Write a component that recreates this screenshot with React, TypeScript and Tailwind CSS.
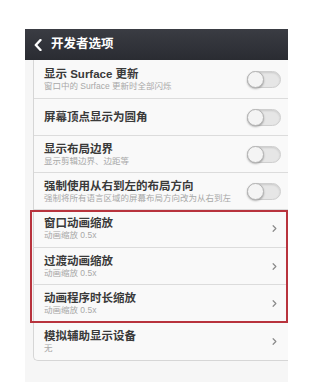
import { ChevronRight } from "lucide-react";

const font = { fontFamily: '"Liberation Sans", "Noto Sans CJK SC", sans-serif' };

type Row = { title: string; sub?: string; kind: "toggle" | "arrow"; h: string };

const rows: Row[] = [
  { title: "显示 Surface 更新", sub: "窗口中的 Surface 更新时全部闪烁", kind: "toggle", h: "h-[39px]" },
  { title: "屏幕顶点显示为圆角", kind: "toggle", h: "h-[37px]" },
  { title: "显示布局边界", sub: "显示剪辑边界、边距等", kind: "toggle", h: "h-[37px]" },
  { title: "强制使用从右到左的布局方向", sub: "强制将所有语言区域的屏幕布局方向改为从右到左", kind: "toggle", h: "h-[37px]" },
  { title: "窗口动画缩放", sub: "动画缩放 0.5x", kind: "arrow", h: "h-[38px]" },
  { title: "过渡动画缩放", sub: "动画缩放 0.5x", kind: "arrow", h: "h-[37px]" },
  { title: "动画程序时长缩放", sub: "动画缩放 0.5x", kind: "arrow", h: "h-[38px]" },
  { title: "模拟辅助显示设备", sub: "无", kind: "arrow", h: "h-[37px]" },
];

function Toggle() {
  return (
    <div className="relative w-[34px] h-[17px] rounded-full bg-[#e6e6e6] border border-[#cfcfcf] shadow-[inset_0_1px_2px_rgba(0,0,0,0.12)]">
      <div className="absolute -left-[1px] -top-[1px] w-[17px] h-[17px] rounded-full bg-[#f4f4f4] border border-[#b5b5b5] shadow-[0_1px_2px_rgba(0,0,0,0.3)]" />
    </div>
  );
}

export default function App() {
  return (
    <div className="w-[332px] h-[382px] bg-white overflow-hidden pl-[25px] pt-[29px]" style={font}>
      <div className="w-[263px] h-[353px] flex flex-col bg-[#f6f6f6]">
        {/* Header */}
        <div className="h-[31px] shrink-0 flex items-center gap-[9px] pl-[9px] bg-gradient-to-b from-[#3a3c43] to-[#2a2c32]">
          <svg width="8" height="12" viewBox="0 0 8 12" className="shrink-0">
            <path d="M6.5 1 L1.8 6 L6.5 11" stroke="white" strokeWidth="2.4" fill="none" strokeLinecap="round" strokeLinejoin="round" />
          </svg>
          <span className="text-white text-[12.5px] font-bold">开发者选项</span>
        </div>

        {/* List */}
        <div className="relative ml-[8px] bg-[#f9f9f9] border-l border-b border-[#d6d6d6] rounded-bl-[5px]">
          {rows.map((r, i) => (
            <div
              key={r.title}
              className={`${r.h} flex items-center pl-[10px] pr-[7px] ${i < rows.length - 1 ? "border-b border-[#dcdcdc]" : ""}`}
            >
              <div className="flex-1 min-w-0 flex flex-col">
                <span className="text-[11.5px] leading-[14px] font-bold text-[#3a3a3a] whitespace-nowrap">{r.title}</span>
                {r.sub && (
                  <span className="text-[8.5px] leading-[11px] text-[#a8a8a8] whitespace-nowrap">{r.sub}</span>
                )}
              </div>
              {r.kind === "toggle" ? (
                <Toggle />
              ) : (
                <ChevronRight className="w-[11px] h-[11px] text-[#8a8a8a] mr-[1px]" strokeWidth={2.6} />
              )}
            </div>
          ))}

          {/* annotation box */}
          <div className="absolute -left-[4px] right-0 top-[150px] h-[113px] border-2 border-[#b8333d] pointer-events-none" />
        </div>
      </div>
    </div>
  );
}
